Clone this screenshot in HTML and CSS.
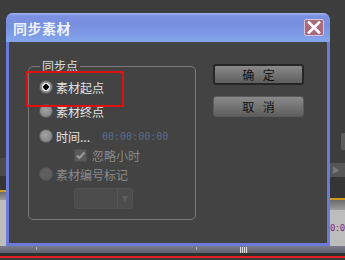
FILE: index.html
```html
<!DOCTYPE html>
<html lang="zh-CN">
<head>
    <meta charset="UTF-8">
    <title>同步素材</title>
    <link rel="stylesheet" href="styles.css">
</head>
<body>

<div class="desk">
    <div class="side side-left">
        <div class="s-dark" style="height:158px"></div>
        <div class="s-mid" style="height:18px"></div>
        <div class="s-deep" style="height:14px"></div>
        <div class="s-orange"></div>
        <div class="s-fade" style="height:8px"></div>
        <div class="s-light" style="height:46px"></div>
    </div>
    <div class="middle"></div>
    <div class="side side-right">
        <div class="s-dark" style="height:133px"></div>
        <div class="s-box" style="height:17px"><span class="nub"></span></div>
        <div class="s-dark" style="height:13px"></div>
        <div class="s-btn" style="height:14px">&#9654;</div>
        <div class="s-deep" style="height:21px"></div>
        <div class="s-orange"></div>
        <div class="s-fade" style="height:10px"></div>
        <div class="s-light tc" style="height:36px">0:0</div>
    </div>
</div>
<div class="ruler">
    <span class="tick" style="left:36px"></span>
    <span class="tick" style="left:196px"></span>
    <span class="grip"></span>
</div>
<div class="redline"></div>

<div class="dialog">
    <div class="titlebar">
        <span class="title">同步素材</span>
        <span class="close">
            <svg width="14" height="13" viewBox="0 0 14 13"><path d="M2 1.5 L12 11.5 M12 1.5 L2 11.5" stroke="#fff" stroke-width="2.6" stroke-linecap="square"/></svg>
        </span>
    </div>
    <div class="dlg-body">
        <fieldset class="group">
            <legend class="legend">同步点</legend>
            <div class="opt opt1"><span class="radio checked"></span>素材起点</div>
            <div class="opt opt2"><span class="radio"></span>素材终点</div>
            <div class="opt opt3"><span class="radio"></span>时间...<span class="timecode">00:00:00:00</span></div>
            <div class="opt check-row off">
                <span class="check">
                    <svg width="11" height="11" viewBox="0 0 11 11"><path d="M2 5.5 L4.5 8 L9.5 2.5" fill="none" stroke="#9a9a9a" stroke-width="2"/></svg>
                </span>忽略小时
            </div>
            <div class="opt opt4 off"><span class="radio dim"></span>素材编号标记</div>
            <div class="select"><span class="sel-arrow">&#9660;</span></div>
        </fieldset>
        <div class="buttons">
            <button class="btn btn-ok">确 定</button>
            <button class="btn">取 消</button>
        </div>
        <div class="mark"></div>
    </div>
</div>

</body>
</html>
```

FILE: styles.css
```css
body {
    margin: 0;
    width: 345px;
    height: 260px;
    overflow: hidden;
    background: #3d3d3d;
    font-family: "Noto Sans CJK SC", "Liberation Sans", sans-serif;
    position: relative;
}
.desk {
    display: flex;
    height: 246px;
}
.side-left {
    width: 6px;
}
.middle {
    flex: 1;
}
.side-right {
    width: 15px;
}
.s-dark { background: #3d3d3d; }
.s-mid { background: #4b4b4b; }
.s-deep { background: #353535; }
.s-orange {
    height: 2px;
    background: #d09a20;
}
.s-fade { background: linear-gradient(#6a6a6a, #9c9c9c); }
.s-light {
    background: #bdbdbd;
}
.s-box {
    display: flex;
    justify-content: flex-end;
}
.nub {
    width: 4px;
    background: #5c5c5c;
    border-radius: 2px 0 0 2px;
}
.s-btn {
    background: #555;
    color: #777;
    font-size: 8px;
    line-height: 14px;
    padding-left: 2px;
}
.tc {
    color: #7a2a8a;
    font-family: "DejaVu Sans Mono", monospace;
    font-size: 9px;
    letter-spacing: -0.6px;
    line-height: 12px;
    padding-top: 12px;
    box-sizing: border-box;
}
.ruler {
    position: relative;
    height: 7px;
    background: linear-gradient(#7a7a8c, #60606e);
    border-bottom: 3px solid #303030;
}
.tick {
    position: absolute;
    top: 1px;
    width: 1px;
    height: 3px;
    background: #b0b0b0;
}
.grip {
    position: absolute;
    left: 240px;
    top: 1px;
    width: 8px;
    height: 6px;
    background: repeating-linear-gradient(90deg, #ddd 0 1px, #777 1px 2px);
}
.redline {
    height: 2px;
    background: #e02020;
}

/* dialog window */
.dialog {
    position: absolute;
    left: 6px;
    top: 13px;
    width: 324px;
    height: 233px;
    box-sizing: border-box;
    background: #6a7bdc;
    border-radius: 7px 7px 0 0;
    padding: 0 3px 3px 3px;
    display: flex;
    flex-direction: column;
}
.titlebar {
    height: 29px;
    margin: 0 -3px;
    border-radius: 7px 7px 0 0;
    background: linear-gradient(#a4b6f0 0, #7b90e0 3px, #7890e0 45%, #84a6ec 100%);
    display: flex;
    align-items: center;
    justify-content: space-between;
    padding: 0 6px 0 7px;
}
.title {
    color: #eef2ff;
    font-size: 14px;
    font-weight: bold;
    letter-spacing: 0.5px;
}
.close {
    width: 18px;
    height: 15px;
    background: #a86a7c;
    border: 1px solid #d4c4dc;
    border-radius: 2px;
    display: flex;
    align-items: center;
    justify-content: center;
}
.dlg-body {
    flex: 1;
    background: #434343;
    display: flex;
    align-items: flex-start;
    position: relative;
}
.group {
    margin: 17px 0 0 19px;
    width: 168px;
    height: 161px;
    box-sizing: border-box;
    border: 1px solid #7a7a7a;
    border-radius: 5px;
    padding: 0 0 0 10px;
}
.legend {
    color: #dcdcdc;
    font-size: 12px;
    line-height: 14px;
    padding: 0 2px;
    margin-left: 1px;
}
.opt {
    display: flex;
    align-items: center;
    color: #e4e4e4;
    font-size: 12px;
    height: 24px;
}
.opt1 { margin-top: 3px; height: 22px; }
.opt2 { height: 26px; }
.off { color: #8a8a8a; }
.radio {
    width: 12px;
    height: 12px;
    border-radius: 50%;
    background: radial-gradient(circle at 45% 40%, #a2a2a2, #7a7a7a);
    border: 1px solid #5a5a5a;
    margin-right: 3px;
    flex: none;
}
.radio.checked {
    background: radial-gradient(circle, #000 0 2.5px, #e8e8e8 3px 4px, #8a8a8a 4.5px);
}
.radio.dim {
    background: #5e5e5e;
    border-color: #505050;
}
.timecode {
    margin-left: 12px;
    color: #5c6c84;
    font-family: "DejaVu Sans Mono", monospace;
    font-size: 10px;
}
.check-row {
    height: 14px;
    padding-left: 35px;
}
.check {
    width: 11px;
    height: 11px;
    background: #5a5a5a;
    border: 1px solid #4e4e4e;
    margin-right: 5px;
    display: flex;
}
.select {
    margin: 2px 0 0 35px;
    width: 59px;
    height: 21px;
    box-sizing: border-box;
    background: #4c4c4c;
    border: 1px solid #525252;
    border-radius: 3px;
    display: flex;
    justify-content: flex-end;
}
.sel-arrow {
    width: 14px;
    border-left: 1px solid #565656;
    color: #5e5e5e;
    font-size: 7px;
    line-height: 19px;
    text-align: center;
}
.buttons {
    margin: 22px 0 0 17px;
    display: flex;
    flex-direction: column;
    gap: 11px;
}
.btn {
    width: 91px;
    height: 21px;
    padding: 0;
    font-family: "Noto Sans CJK SC", sans-serif;
    font-size: 12px;
    color: #111;
    letter-spacing: 3px;
    text-indent: 3px;
    background: linear-gradient(#8a8a8a, #5e5e5e);
    border: 1px solid #5a5a5a;
    border-radius: 3px;
}
.btn-ok {
    border: 2px solid #262626;
}
.mark {
    position: absolute;
    left: 17px;
    top: 29px;
    width: 94px;
    height: 32px;
    border: 2px solid #e01010;
}
```
